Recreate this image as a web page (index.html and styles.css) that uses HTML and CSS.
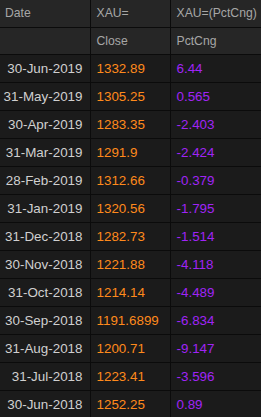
FILE: index.html
```html
<!DOCTYPE html>
<html>
<head>
<meta charset="utf-8">
<link rel="stylesheet" href="styles.css">
</head>
<body>
<table class="grid">
  <colgroup><col class="c-date"><col class="c-close"><col class="c-pct"></colgroup>
  <thead>
    <tr class="hdr"><th class="h-date">Date</th><th>XAU=</th><th>XAU=(PctCng)</th></tr>
    <tr class="hdr"><th></th><th>Close</th><th>PctCng</th></tr>
  </thead>
  <tbody>
    <tr><td class="date">30-Jun-2019</td><td class="close">1332.89</td><td class="pct">6.44</td></tr>
    <tr><td class="date">31-May-2019</td><td class="close">1305.25</td><td class="pct">0.565</td></tr>
    <tr><td class="date">30-Apr-2019</td><td class="close">1283.35</td><td class="pct">-2.403</td></tr>
    <tr><td class="date">31-Mar-2019</td><td class="close">1291.9</td><td class="pct">-2.424</td></tr>
    <tr><td class="date">28-Feb-2019</td><td class="close">1312.66</td><td class="pct">-0.379</td></tr>
    <tr><td class="date">31-Jan-2019</td><td class="close">1320.56</td><td class="pct">-1.795</td></tr>
    <tr><td class="date">31-Dec-2018</td><td class="close">1282.73</td><td class="pct">-1.514</td></tr>
    <tr><td class="date">30-Nov-2018</td><td class="close">1221.88</td><td class="pct">-4.118</td></tr>
    <tr><td class="date">31-Oct-2018</td><td class="close">1214.14</td><td class="pct">-4.489</td></tr>
    <tr><td class="date">30-Sep-2018</td><td class="close">1191.6899</td><td class="pct">-6.834</td></tr>
    <tr><td class="date">31-Aug-2018</td><td class="close">1200.71</td><td class="pct">-9.147</td></tr>
    <tr><td class="date">31-Jul-2018</td><td class="close">1223.41</td><td class="pct">-3.596</td></tr>
    <tr><td class="date">30-Jun-2018</td><td class="close">1252.25</td><td class="pct">0.89</td></tr>
  </tbody>
</table>
</body>
</html>
```
FILE: styles.css
```css
html, body {
  margin: 0;
  padding: 0;
  background: #1b1b1b;
  overflow: hidden;
}
.grid {
  border-collapse: collapse;
  table-layout: fixed;
  width: 262px;
  font-family: "Liberation Sans", Arial, sans-serif;
  font-size: 13.4px;
}
.c-date { width: 90px; }
.c-close { width: 80px; }
.c-pct { width: 92px; }
.grid th, .grid td {
  height: 27px;
  padding: 0 0 0 6px;
  border-right: 1px solid #0b0b0b;
  border-bottom: 1px solid #0b0b0b;
  white-space: nowrap;
  overflow: hidden;
  box-sizing: border-box;
}
.grid th {
  background: #262626;
  color: #a6a6a6;
  font-weight: normal;
  font-size: 12.2px;
  text-align: left;
}
.grid .h-date { padding-left: 5px; }
.grid td {
  background: #1b1b1b;
  height: 28px;
}
.grid td.date {
  color: #d0d0d0;
  text-align: right;
  padding: 0 7px 0 0;
}
.grid td.close { color: #ff8a1c; }
.grid td.pct { color: #a024f5; }
```
